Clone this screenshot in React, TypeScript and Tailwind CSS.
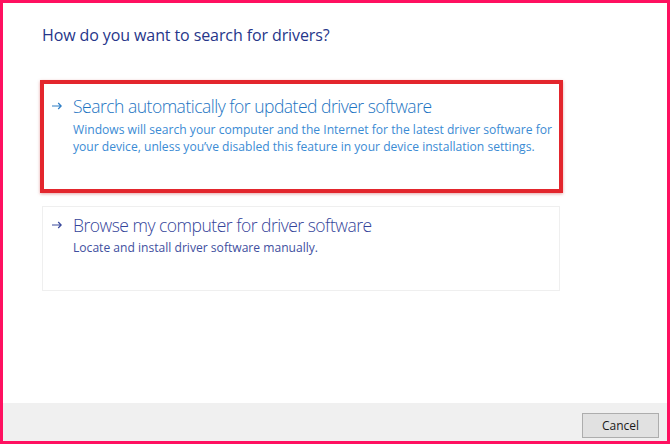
const font = { fontFamily: '"Open Sans", "Noto Sans", sans-serif' };

function Arrow({ color }: { color: string }) {
  return (
    <svg width="10" height="8" viewBox="0 0 10 8" fill="none" stroke={color} strokeWidth="1.2">
      <path d="M0 4h9.2M6.2 1l3 3-3 3" />
    </svg>
  );
}

function Option({
  title,
  desc,
  selected,
}: {
  title: string;
  desc: string[];
  selected?: boolean;
}) {
  return (
    <div
      className={
        selected
          ? 'w-[523px] h-[113px] border-4 border-[#e3262d] shadow-[0_1px_3px_rgba(180,0,0,0.35)] pl-[8px] pt-[10px]'
          : 'w-[518px] h-[85px] ml-[2px] border border-[#efefef] pl-[9px] pt-[6px]'
      }
    >
      <div className="flex items-start">
        <div className="w-[21px] h-[24px] flex items-center">
          <Arrow color={selected ? '#2f7fc6' : '#3a4a9c'} />
        </div>
        <div>
          <div
            className={`text-[17.5px] leading-[24px] font-light tracking-[-0.5px] ${selected ? 'text-[#1c74c2]' : 'text-[#34449a]'}`}
          >
            {title}
          </div>
          <div
            className={`text-[12.1px] leading-[17px] ${selected ? 'mt-[3px] text-[#3b8bd4]' : 'mt-[2px] text-[#3f50a0]'}`}
          >
            {desc.map((d) => (
              <div key={d}>{d}</div>
            ))}
          </div>
        </div>
      </div>
    </div>
  );
}

export default function App() {
  return (
    <div
      style={font}
      className="w-[670px] h-[444px] border-[3px] border-[#ff1060] bg-white flex flex-col"
    >
      <div className="flex-1 pl-[37px] pt-[21px]">
        <h1 className="ml-[2px] text-[16px] leading-[22px] text-[#26368a] tracking-[-0.1px]">
          How do you want to search for drivers?
        </h1>
        <div className="mt-[34px]">
          <Option
            selected
            title="Search automatically for updated driver software"
            desc={[
              'Windows will search your computer and the Internet for the latest driver software for',
              'your device, unless you’ve disabled this feature in your device installation settings.',
            ]}
          />
        </div>
        <div className="mt-[13px]">
          <Option
            title="Browse my computer for driver software"
            desc={['Locate and install driver software manually.']}
          />
        </div>
      </div>
      <div className="h-[38px] bg-[#f0f0f0] flex justify-end items-start pt-[10px] pr-[8px]">
        <button className="w-[77px] h-[25px] border border-[#adadad] bg-[#e1e1e1] text-[12px] text-[#1a1a1a]">
          Cancel
        </button>
      </div>
    </div>
  );
}
